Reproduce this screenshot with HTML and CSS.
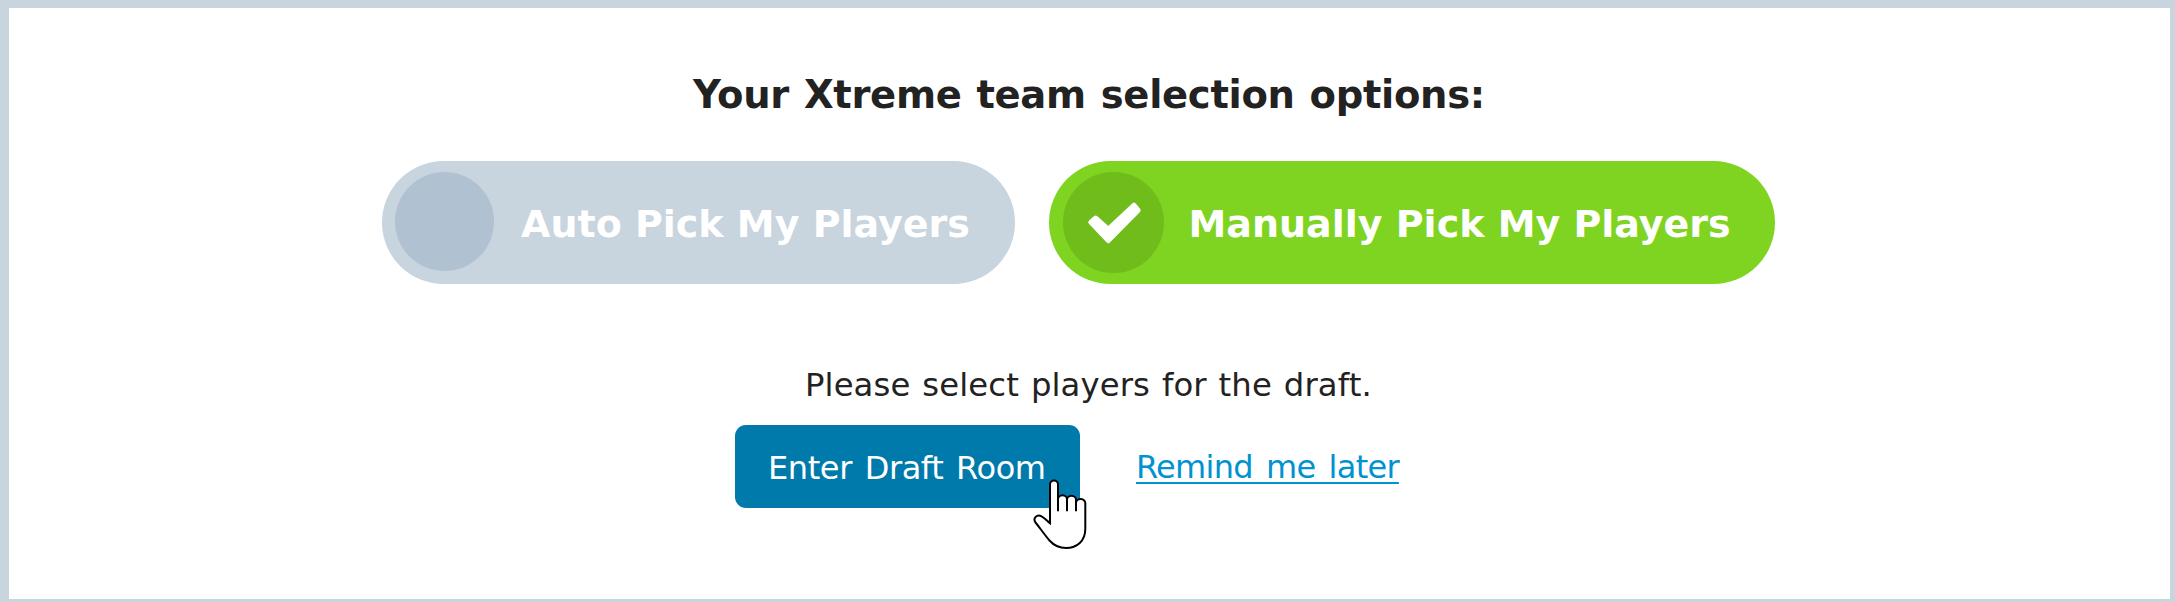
FILE: index.html
```html
<!DOCTYPE html>
<html lang="en">
<head>
<meta charset="utf-8">
<title>Team selection</title>
<link rel="stylesheet" href="styles.css">
</head>
<body>
<main class="panel">
  <h1 class="title">Your Xtreme team selection options:</h1>
  <div class="options">
    <div class="option option-auto">
      <span class="dot"></span>
      <span class="label">Auto Pick My Players</span>
    </div>
    <div class="option option-manual">
      <span class="dot">
        <svg class="check" viewBox="0 0 101 101"><path d="M27.5 50.3L32.6 45.8L45.3 57L71 33L75.4 38.3L45.3 69Z" fill="#fff" stroke="#fff" stroke-width="4.500" stroke-linejoin="round"/></svg>
      </span>
      <span class="label">Manually Pick My Players</span>
    </div>
  </div>
  <p class="message">Please select players for the draft.</p>
  <div class="actions">
    <button class="enter"><span class="enter-text">Enter Draft Room</span>
      <svg class="cursor" viewBox="0 0 80 85"><path d="M30 53.300V14.500a4 4 0 0 1 8 0V29.500a4.500 4.200 0 0 1 9 0V30a4.500 4.200 0 0 1 9 0V33a4.650 4.200 0 0 1 9.300 .5V59C65.300 71 57 78 46 78C38 78 33.500 75 29.500 70.500C24 64 20 58 15.500 52.500C12.500 48 17 44 21.500 46.300C25 48 27 51 30 53.300Z" fill="#fff"/><path d="M38 29V41.300M47 29V41.300M56 30V41.300" fill="none"/></svg>
    </button>
    <a class="remind" href="#">Remind me later</a>
  </div>
</main>
</body>
</html>
```
FILE: styles.css
```css
* { box-sizing: border-box; }
body {
  margin: 0;
  height: 602px;
  padding: 8px 5px 3px 9px;
  background: #c8d4de;
  font-family: "DejaVu Sans", Verdana, sans-serif;
  color: #222;
}
.panel { height: 591px; background: #fff; overflow: hidden; }
.title {
  margin: 64px 0 0 684px;
  font-size: 38.5px;
  line-height: 46px;
  letter-spacing: -0.3px;
  word-spacing: 1.8px;
  white-space: nowrap;
}
.options { display: flex; gap: 34px; margin: 43px 0 0 373px; }
.option {
  display: flex;
  align-items: flex-start;
  height: 123px;
  padding: 11px 0 0 13px;
  border-radius: 62px;
  color: #fff;
  font-size: 38px;
  font-weight: bold;
  white-space: nowrap;
}
.option-auto { width: 633px; background: #c8d4de; }
.option-manual { width: 726px; background: #7ed421; padding-left: 14px; }
.dot { flex: none; width: 99px; height: 99px; border-radius: 50%; background: #b0c1d2; }
.option-manual .dot { width: 101px; height: 101px; background: #6fbc1a; }
.check { display: block; width: 101px; height: 101px; }
.label { margin: 29px 0 0 27px; line-height: 46px; }
.option-manual .label { margin-left: 24.5px; }
.message {
  margin: 81px 0 0 796px;
  font-size: 32.3px;
  line-height: 40px;
  letter-spacing: 0.1px;
  word-spacing: 1.6px;
  white-space: nowrap;
}
.actions {
  display: flex;
  align-items: flex-start;
  margin: 20px 0 0 726px;
  font-size: 32px;
  line-height: 40px;
}
.enter {
  position: relative;
  width: 345px;
  height: 83px;
  padding: 2px 0 0 33px;
  border: 0;
  border-radius: 11px;
  background: #007aab;
  color: #fff;
  font: inherit;
  text-align: left;
  white-space: nowrap;
}
.enter-text { letter-spacing: -0.4px; word-spacing: 3px; }
.cursor {
  position: absolute;
  left: 285px;
  top: 45px;
  width: 80px;
  height: 85px;
  stroke: #000;
  stroke-width: 2;
}
.remind {
  margin: 22px 0 0 56px;
  color: #0093d0;
  letter-spacing: -0.7px;
  word-spacing: 3.6px;
  text-decoration: underline;
  text-decoration-thickness: 2px;
  text-decoration-skip-ink: none;
  text-underline-offset: 4px;
  white-space: nowrap;
}
```
